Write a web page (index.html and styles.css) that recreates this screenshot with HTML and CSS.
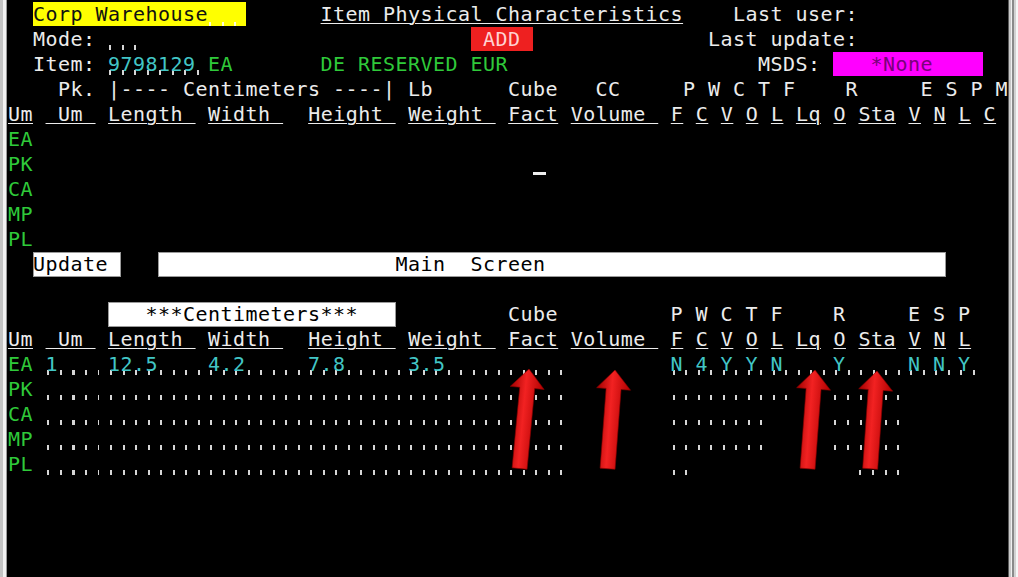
FILE: index.html
```html
<!DOCTYPE html>
<html>
<head>
<meta charset="utf-8">
<title>Item Physical Characteristics</title>
<link rel="stylesheet" href="styles.css">
</head>
<body>
<div class="edge-left"></div>
<div class="screen">
<div class="row">  <span class="yel">Corp Warehouse<span class="fill dk">   </span></span>      <span class="u">Item Physical Characteristics</span>    Last user:</div>
<div class="row">  Mode: <span class="fill">   </span>                          <span class="red"> ADD </span>              Last update:</div>
<div class="row">  Item: <span class="fill cy">9798129 </span><span class="gr">EA</span>       <span class="gr">DE RESERVED EUR</span>                    MSDS: <span class="mag">   *None    </span></div>
<div class="row">    Pk. |---- Centimeters ----| Lb      Cube   CC     P W C T F    R     E S P M</div>
<div class="row"><span class="u">Um</span> <span class="u"> Um </span> <span class="u">Length </span> <span class="u">Width </span>  <span class="u">Height </span> <span class="u">Weight </span> <span class="u">Fact</span> <span class="u">Volume </span> <span class="u">F</span> <span class="u">C</span> <span class="u">V</span> <span class="u">O</span> <span class="u">L</span> <span class="u">Lq</span> <span class="u">O</span> <span class="u">Sta</span> <span class="u">V</span> <span class="u">N</span> <span class="u">L</span> <span class="u">C</span></div>
<div class="row"><span class="gr">EA</span></div>
<div class="row"><span class="gr">PK</span>                                        <span class="cur"> </span></div>
<div class="row"><span class="gr">CA</span></div>
<div class="row"><span class="gr">MP</span></div>
<div class="row"><span class="gr">PL</span></div>
<div class="row">  <span class="box">Update </span>   <span class="box wide">                   Main  Screen                                </span></div>
<div class="row"> </div>
<div class="row">        <span class="box">   ***Centimeters***   </span>         Cube         P W C T F    R     E S P</div>
<div class="row"><span class="u">Um</span> <span class="u"> Um </span> <span class="u">Length </span> <span class="u">Width </span>  <span class="u">Height </span> <span class="u">Weight </span> <span class="u">Fact</span> <span class="u">Volume </span> <span class="u">F</span> <span class="u">C</span> <span class="u">V</span> <span class="u">O</span> <span class="u">L</span> <span class="u">Lq</span> <span class="u">O</span> <span class="u">Sta</span> <span class="u">V</span> <span class="u">N</span> <span class="u">L</span></div>
<div class="row"><span class="gr">EA</span> <span class="fill cy">1    12.5    4.2     7.8     3.5          </span>        <span class="fill cy">N 4 Y Y N    Y     N N Y </span></div>
<div class="row"><span class="gr">PK</span> <span class="fill">                                          </span>        <span class="fill">          </span>   <span class="fill">      </span></div>
<div class="row"><span class="gr">CA</span> <span class="fill">                                          </span>        <span class="fill">        </span>     <span class="fill">      </span></div>
<div class="row"><span class="gr">MP</span> <span class="fill">                                          </span>        <span class="fill">        </span>     <span class="fill">      </span></div>
<div class="row"><span class="gr">PL</span> <span class="fill">                                          </span>        <span class="fill">  </span>             <span class="fill">    </span></div>
<div class="row"> </div>
<div class="row"> </div>
<div class="row"> </div>
<div class="row"> </div>
</div>
<div class="edge-right"></div>
<svg class="arrows" width="1018" height="577" viewBox="0 0 1018 577" aria-hidden="true">
  <defs>
    <linearGradient id="ag" x1="0" x2="1" y1="0" y2="0">
      <stop offset="0" stop-color="#a00000"/>
      <stop offset="0.45" stop-color="#f22222"/>
      <stop offset="1" stop-color="#b00000"/>
    </linearGradient>
  </defs>
  <g transform="translate(529 369) rotate(5.4)"><path d="M0 0 L17 19 L7.5 19 L7.5 100 L-7.5 100 L-7.5 19 L-17 19 Z" fill="url(#ag)" stroke="#8a0000" stroke-width="0.6"/></g>
  <g transform="translate(615 370) rotate(4.3)"><path d="M0 0 L17 19 L7.5 19 L7.5 99 L-7.5 99 L-7.5 19 L-17 19 Z" fill="url(#ag)" stroke="#8a0000" stroke-width="0.6"/></g>
  <g transform="translate(815 370) rotate(4.3)"><path d="M0 0 L17 19 L7.5 19 L7.5 99 L-7.5 99 L-7.5 19 L-17 19 Z" fill="url(#ag)" stroke="#8a0000" stroke-width="0.6"/></g>
  <g transform="translate(877 371) rotate(4)"><path d="M0 0 L17 19 L7.5 19 L7.5 98 L-7.5 98 L-7.5 19 L-17 19 Z" fill="url(#ag)" stroke="#8a0000" stroke-width="0.6"/></g>
</svg>
</body>
</html>
```
FILE: styles.css
```css
html, body {
  margin: 0;
  padding: 0;
}
body {
  width: 1018px;
  height: 577px;
  overflow: hidden;
  display: flex;
  position: relative;
  background: #000;
  font-family: "DejaVu Sans Mono", "Liberation Mono", monospace;
}
.edge-left {
  width: 7px;
  flex: none;
  background: linear-gradient(to right, #c4c4c4 0 3px, #f2f2f2 3px 6px, #9a9a9a 6px 7px);
}
.edge-right {
  width: 10px;
  flex: none;
  background: linear-gradient(to right, #5a5a5a 0 1px, #c8c8c8 1px 3px, #f0f0f0 3px 4px, #8a8a8a 4px 6px, #d2d2d2 6px 8px, #f6f6f6 8px 10px);
}
.screen {
  flex: 1;
  padding: 2px 0 0 1px;
  color: #ececec;
  font-size: 20px;
  letter-spacing: 0.459px;
}
.row {
  height: 25px;
  line-height: 25px;
  white-space: pre;
}
.u {
  text-decoration: underline;
  text-decoration-thickness: 1px;
  text-underline-offset: 2px;
}
.gr { color: #2fca3a; }
.cy { color: #42c6c6; }
.fill, .yel, .red, .mag, .box, .cur {
  display: inline-block;
  vertical-align: top;
  height: 25px;
  line-height: 25px;
}
.fill {
  background-image: repeating-linear-gradient(to right, transparent 0 1.5px, #d6d6d6 1.5px 3.5px, transparent 3.5px 12.5px);
  background-size: 100% 5px;
  background-repeat: no-repeat;
  background-position: 0 18px;
}
.fill.dk {
  background-image: repeating-linear-gradient(to right, transparent 0 1.5px, #fbfbd8 1.5px 3.5px, transparent 3.5px 12.5px);
  background-position: 0 20px;
  background-size: 100% 4px;
}
.yel {
  background: #ffff00;
  color: #111;
  height: 24px;
}
.red {
  background: #ee2020;
  color: #ffd2d2;
  height: 24px;
}
.mag {
  background: #ff00ff;
  color: #7a007a;
  height: 24px;
}
.box {
  background: #fff;
  color: #000;
  box-shadow: inset 0 0 0 1px #9a9a9a;
}
.cur {
  background: linear-gradient(#eee, #eee) no-repeat 0 20px / 100% 3px;
}
.arrows {
  position: absolute;
  left: 0;
  top: 0;
  pointer-events: none;
}
```
